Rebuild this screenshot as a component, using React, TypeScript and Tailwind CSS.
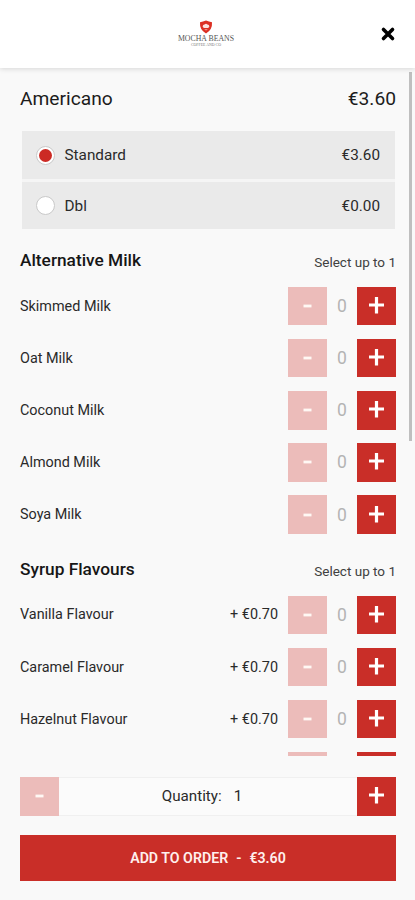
import { useState } from "react";

type Item = { name: string; price?: string };

const options = [
  { name: "Standard", price: "€3.60" },
  { name: "Dbl", price: "€0.00" },
];

const groups: { title: string; items: Item[] }[] = [
  {
    title: "Alternative Milk",
    items: [
      { name: "Skimmed Milk" },
      { name: "Oat Milk" },
      { name: "Coconut Milk" },
      { name: "Almond Milk" },
      { name: "Soya Milk" },
    ],
  },
  {
    title: "Syrup Flavours",
    items: [
      { name: "Vanilla Flavour", price: "€0.70" },
      { name: "Caramel Flavour", price: "€0.70" },
      { name: "Hazelnut Flavour", price: "€0.70" },
    ],
  },
];

function Minus() {
  return (
    <button
      aria-label="Remove"
      className="flex h-[38.5px] w-[39px] shrink-0 items-center justify-center bg-[#ecbcba]"
    >
      <svg width="39" height="38" viewBox="0 0 39 38">
        <path d="M15.5 19h8" stroke="#fff8f4" strokeWidth="2.8" />
      </svg>
    </button>
  );
}

function Plus({ onClick }: { onClick?: () => void }) {
  return (
    <button
      aria-label="Add"
      onClick={onClick}
      className="flex h-[38.5px] w-[39px] shrink-0 items-center justify-center bg-[#c92e28]"
    >
      <svg width="39" height="38" viewBox="0 0 39 38">
        <path d="M12 18h15M19.5 10v16.5" stroke="#fff" strokeWidth="3.2" />
      </svg>
    </button>
  );
}

function Logo() {
  return (
    <div className="mr-[3px] mb-[2px] flex flex-col items-center">
      <svg width="14" height="14" viewBox="0 0 14 14">
        <path
          d="M1 2.2Q4 2 7 .6 10 2 13 2.2 13.6 9.6 7 13.6 .4 9.6 1 2.2z"
          fill="#dc3024"
        />
        <path d="M3.6 6.4q.3-2 2-1.8Q7 2.8 8.4 4.6q1.8-.1 2 1.8L9.2 8H4.8z" fill="#fbe3df" />
        <path d="M5.2 9h3.6L7 10.8z" fill="#ef8d84" />
      </svg>
      <span className="mt-px font-['Liberation_Serif',serif] text-[7.8px] leading-[8px] whitespace-nowrap text-[#555]">
        MOCHA BEANS
      </span>
      <span className="font-['Liberation_Serif',serif] text-[3.9px] leading-[4px] whitespace-nowrap text-[#777]">
        COFFEE AND CO
      </span>
    </div>
  );
}

export default function App() {
  const [selected, setSelected] = useState(0);
  const [quantity, setQuantity] = useState(1);

  return (
    <div className="flex h-[900px] w-[415px] flex-col overflow-hidden bg-[#f9f9f9] font-[Roboto,sans-serif] text-[#2a2a2a]">
      <header className="relative z-10 grid h-[68px] shrink-0 grid-cols-[1fr_auto_1fr] items-center bg-white px-[19px] shadow-[0_1px_5px_rgba(0,0,0,0.14)]">
        <span />
        <Logo />
        <button aria-label="Close" className="justify-self-end">
          <svg width="16" height="16" viewBox="0 0 16 16">
            <path
              d="M3.5 3.5l9 9M12.5 3.5l-9 9"
              stroke="#000"
              strokeWidth="3.6"
              strokeLinecap="round"
            />
          </svg>
        </button>
      </header>

      <div className="flex h-[687.5px] shrink-0 overflow-hidden">
        <main className="w-[396px] shrink-0 pl-5">
          <div className="flex h-[63px] items-center justify-between text-[19.2px] text-[#1c1c1c]">
            <h1>Americano</h1>
            <span>€3.60</span>
          </div>

          <div className="mr-px ml-0.5 flex h-[98px] flex-col gap-[3px] bg-[#f5f5f5]">
            {options.map((option, i) => (
              <button
                key={option.name}
                onClick={() => setSelected(i)}
                className="flex flex-1 items-center bg-[#eaeaea] pt-px pr-[15px] pl-[14px] text-[15.3px]"
              >
                <span className="flex size-[19px] items-center justify-center rounded-full border border-[#c9c9c9] bg-white">
                  {selected === i && <span className="size-[13px] rounded-full bg-[#cc2a24]" />}
                </span>
                <span className="ml-[9.5px] pt-px">{option.name}</span>
                <span className="ml-auto pt-px">{option.price}</span>
              </button>
            ))}
          </div>

          <div className="pt-[3px]">
            {groups.map((group) => (
              <section key={group.title}>
                <div className="flex h-12 items-center justify-between pt-[9px]">
                  <h2 className="pt-px text-[17.3px] font-medium text-[#161616]">{group.title}</h2>
                  <span className="pt-[3px] text-[13.5px] text-[#404040]">Select up to 1</span>
                </div>
                {group.items.map((item) => (
                  <div key={item.name} className="flex h-[52.15px] items-center">
                    <span className="pt-px text-[14.4px]">{item.name}</span>
                    {item.price && <span className="ml-auto pt-px text-[14.4px]">+ {item.price}</span>}
                    <div className={item.price ? "ml-[10px] flex items-center" : "ml-auto flex items-center"}>
                      <Minus />
                      <span className="w-[30px] text-center text-[17.5px] text-[#b4b4b4]">0</span>
                      <Plus />
                    </div>
                  </div>
                ))}
              </section>
            ))}
            {/* top edge of the next row, clipped by the scroll area */}
            <div className="flex justify-end gap-[30px] pt-[6.8px]">
              <span className="h-[38.5px] w-[39px] bg-[#ecbcba]" />
              <span className="h-[38.5px] w-[39px] bg-[#c92e28]" />
            </div>
          </div>
        </main>
        <div className="mt-1 ml-[12.5px] h-[369px] w-[3.5px] shrink-0 bg-[#bfbfbf]" />
      </div>

      <footer className="mt-[21.5px] mr-[19px] ml-5">
        <div className="flex h-[38.5px] items-center">
          <Minus />
          <div className="flex h-full flex-1 items-center justify-center gap-3 border-y border-[#f0f0f0] bg-[#fbfbfb] pt-px pr-3 text-[15.2px]">
            <span>Quantity:</span>
            <span>{quantity}</span>
          </div>
          <Plus onClick={() => setQuantity(quantity + 1)} />
        </div>
        <button className="mt-[19.5px] flex h-[46px] w-full items-center justify-center gap-2 bg-[#c92e28] pt-px text-[14.2px] font-semibold text-[#fff0ee]">
          <span>ADD TO ORDER</span>
          <span>-</span>
          <span>€3.60</span>
        </button>
      </footer>
    </div>
  );
}
